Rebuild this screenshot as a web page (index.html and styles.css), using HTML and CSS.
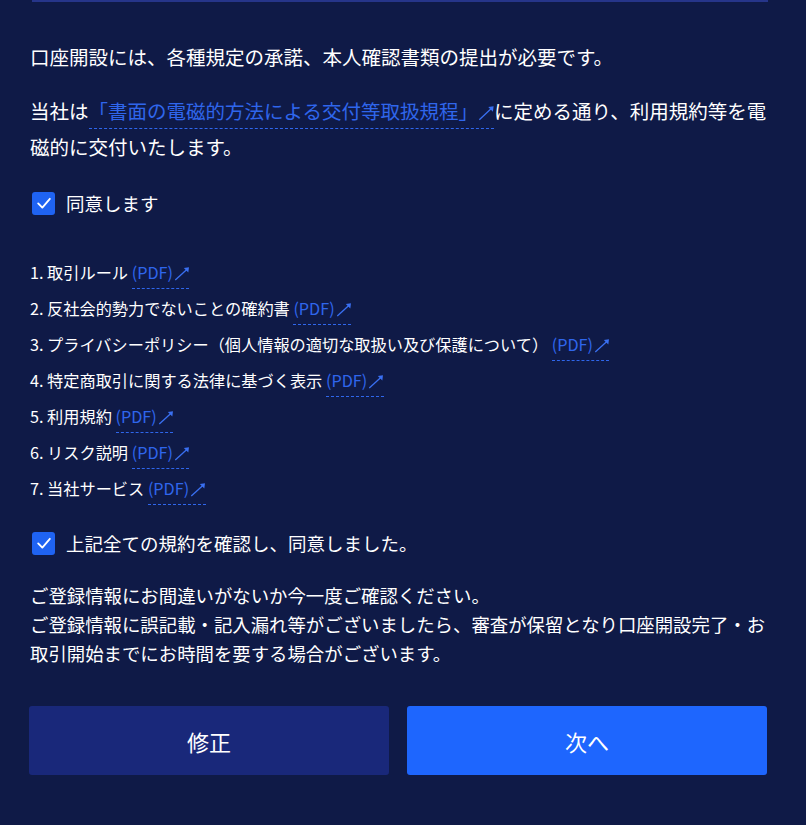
FILE: index.html
```html
<!DOCTYPE html>
<html lang="ja">
<head>
  <meta charset="UTF-8" />
  <meta name="viewport" content="width=device-width, initial-scale=1" />
  <title>口座開設 - 規約への同意</title>
  <link rel="stylesheet" href="styles.css">
</head>
<body>

  <div class="page">
    <div class="prev-box"></div>

    <p class="lead">口座開設には、各種規定の承諾、本人確認書類の提出が必要です。</p>
    <p class="lead">当社は<a class="doc-link" href="#">「書面の電磁的方法による交付等取扱規程」<svg class="ext" viewBox="0 0 18 18"><path d="M1.5 16.5 L15 4"/><path class="tip" d="M17.5 1.5 L16.8 7.5 L11.5 2.3 Z"/></svg></a>に定める通り、利用規約等を電磁的に交付いたします。</p>

    <label class="check-row first">
      <span class="check-box"><svg viewBox="0 0 24 24"><path d="M5 12.5 L10 17.5 L19 7"/></svg></span>
      同意します
    </label>

    <!-- 規約一覧 -->
    <ol class="doc-list">
      <li>1. 取引ルール <a class="doc-link" href="#">(PDF)<svg class="ext" viewBox="0 0 18 18"><path d="M1.5 16.5 L15 4"/><path class="tip" d="M17.5 1.5 L16.8 7.5 L11.5 2.3 Z"/></svg></a></li>
      <li>2. 反社会的勢力でないことの確約書 <a class="doc-link" href="#">(PDF)<svg class="ext" viewBox="0 0 18 18"><path d="M1.5 16.5 L15 4"/><path class="tip" d="M17.5 1.5 L16.8 7.5 L11.5 2.3 Z"/></svg></a></li>
      <li>3. プライバシーポリシー（個人情報の適切な取扱い及び保護について） <a class="doc-link" href="#">(PDF)<svg class="ext" viewBox="0 0 18 18"><path d="M1.5 16.5 L15 4"/><path class="tip" d="M17.5 1.5 L16.8 7.5 L11.5 2.3 Z"/></svg></a></li>
      <li>4. 特定商取引に関する法律に基づく表示 <a class="doc-link" href="#">(PDF)<svg class="ext" viewBox="0 0 18 18"><path d="M1.5 16.5 L15 4"/><path class="tip" d="M17.5 1.5 L16.8 7.5 L11.5 2.3 Z"/></svg></a></li>
      <li>5. 利用規約 <a class="doc-link" href="#">(PDF)<svg class="ext" viewBox="0 0 18 18"><path d="M1.5 16.5 L15 4"/><path class="tip" d="M17.5 1.5 L16.8 7.5 L11.5 2.3 Z"/></svg></a></li>
      <li>6. リスク説明 <a class="doc-link" href="#">(PDF)<svg class="ext" viewBox="0 0 18 18"><path d="M1.5 16.5 L15 4"/><path class="tip" d="M17.5 1.5 L16.8 7.5 L11.5 2.3 Z"/></svg></a></li>
      <li>7. 当社サービス <a class="doc-link" href="#">(PDF)<svg class="ext" viewBox="0 0 18 18"><path d="M1.5 16.5 L15 4"/><path class="tip" d="M17.5 1.5 L16.8 7.5 L11.5 2.3 Z"/></svg></a></li>
    </ol>

    <label class="check-row second">
      <span class="check-box"><svg viewBox="0 0 24 24"><path d="M5 12.5 L10 17.5 L19 7"/></svg></span>
      上記全ての規約を確認し、同意しました。
    </label>

    <p class="notice">ご登録情報にお間違いがないか今一度ご確認ください。<br>ご登録情報に誤記載・記入漏れ等がございましたら、審査が保留となり口座開設完了・お取引開始までにお時間を要する場合がございます。</p>

    <div class="actions">
      <button class="btn btn-back">修正</button>
      <button class="btn btn-next">次へ</button>
    </div>
  </div>

</body>
</html>
```

FILE: styles.css
```css
* {
  box-sizing: border-box;
}
body {
  margin: 0;
  background: #0f1a47;
  color: #ffffff;
  font-family: "Noto Sans CJK JP", "Noto Sans", sans-serif;
  height: 825px;
  overflow: hidden;
}
.page {
  width: 738px;
  margin-left: 29px;
}
.prev-box {
  height: 2px;
  margin: 0 -1px 0 3px;
  background: #26358a;
}
.lead {
  margin: 18px 0 0;
  padding-left: 1px;
  font-size: 19.5px;
  line-height: 36px;
}
.lead:first-of-type {
  margin-top: 37px;
}
.lead .ext {
  width: 16px;
  height: 16px;
  margin-left: 0;
}
.doc-link {
  color: #2f66ec;
  text-decoration: none;
  border-bottom: 1px dashed #2f66ec;
  padding-bottom: 3px;
}
.ext {
  width: 0.95em;
  height: 0.95em;
  margin-left: 1px;
  vertical-align: -2px;
}
.ext path {
  stroke: #3a70f2;
  stroke-width: 1.5;
  fill: none;
}
.ext path.tip {
  fill: #3a70f2;
  stroke: none;
}
.check-row {
  display: flex;
  align-items: center;
  gap: 11px;
  height: 36px;
  padding-left: 3px;
  font-size: 18.5px;
}
.check-row.first {
  margin-top: 20px;
}
.check-row.second {
  margin-top: 19px;
}
.check-box {
  width: 23px;
  height: 23px;
  border-radius: 3px;
  background: #1f63f2;
  display: flex;
  align-items: center;
  justify-content: center;
}
.check-box svg {
  width: 20px;
  height: 20px;
}
.check-box path {
  fill: none;
  stroke: #ffffff;
  stroke-width: 2.2;
  stroke-linecap: round;
  stroke-linejoin: round;
}
.doc-list {
  list-style: none;
  margin: 33px 0 0;
  padding: 0 0 0 1px;
  font-size: 16.2px;
}
.doc-list li {
  line-height: 36px;
}
.doc-list .doc-link {
  padding-bottom: 4px;
}
.notice {
  margin: 20px 0 0;
  padding-left: 1px;
  font-size: 18.4px;
  line-height: 29px;
}
.actions {
  display: flex;
  gap: 18px;
  margin-top: 38px;
}
.btn {
  flex: 1;
  height: 69px;
  border: none;
  border-radius: 3px;
  color: #ffffff;
  font-family: inherit;
  font-size: 22px;
  cursor: pointer;
}
.btn-back {
  background: #19287a;
}
.btn-next {
  background: #1e66fe;
}
```
